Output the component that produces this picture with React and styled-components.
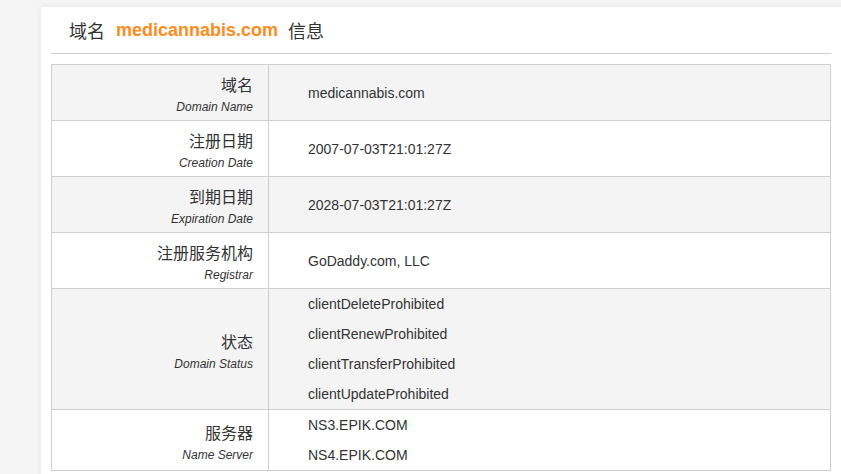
import React from 'react';
import styled, { createGlobalStyle } from 'styled-components';

const GlobalStyle = createGlobalStyle`
  html, body {
    margin: 0;
    padding: 0;
    background: #f5f5f5;
    overflow: hidden;
  }
  body {
    font-family: "Liberation Sans", Arial, "Noto Sans CJK SC", sans-serif;
    color: #333;
  }
`;

const Page = styled.div`
  padding: 7px 0 0 41px;
  height: 474px;
  box-sizing: border-box;
`;

const Card = styled.div`
  width: 800px;
  background: #fff;
  box-shadow: 0 0 6px rgba(0, 0, 0, 0.08);
  padding: 0 0 4px 10px;
  min-height: 480px;
`;

const Header = styled.div`
  width: 780px;
  height: 47px;
  box-sizing: border-box;
  border-bottom: 1px solid #cfcfcf;
  padding-left: 18px;
  display: flex;
  align-items: center;
  font-size: 18px;
  color: #333;
  font-family: "Liberation Sans", Arial, "Noto Sans CJK SC", sans-serif;
`;

const Domain = styled.span`
  color: #ff8c1a;
  font-weight: bold;
  margin: 0 10px 0 11px;
`;

const Table = styled.table`
  margin-top: 10px;
  width: 780px;
  border-collapse: collapse;
  border: 1px solid #cfcfcf;
`;

const Row = styled.tr`
  background: ${(p) => (p.$shaded ? '#f4f4f4' : '#fff')};
  border-bottom: 1px solid #cfcfcf;
`;

const LabelCell = styled.td`
  width: 217px;
  box-sizing: border-box;
  padding: 7px 15px 4px 0;
  text-align: right;
  vertical-align: middle;
  border-right: 1px solid #cfcfcf;
`;

const LabelZh = styled.div`
  font-size: 16px;
  line-height: 24px;
  font-family: "Noto Sans CJK SC", "Liberation Sans", sans-serif;
  color: #333;
`;

const LabelEn = styled.div`
  margin-top: 2px;
  font-size: 12px;
  line-height: 18px;
  font-style: italic;
  color: #333;
`;

const ValueCell = styled.td`
  padding: 0 0 0 39px;
  vertical-align: middle;
  font-size: 14px;
  color: #333;
`;

const ValueLine = styled.div`
  line-height: 30px;
`;

const rows = [
  { zh: '域名', en: 'Domain Name', values: ['medicannabis.com'] },
  { zh: '注册日期', en: 'Creation Date', values: ['2007-07-03T21:01:27Z'] },
  { zh: '到期日期', en: 'Expiration Date', values: ['2028-07-03T21:01:27Z'] },
  { zh: '注册服务机构', en: 'Registrar', values: ['GoDaddy.com, LLC'] },
  {
    zh: '状态',
    en: 'Domain Status',
    values: [
      'clientDeleteProhibited',
      'clientRenewProhibited',
      'clientTransferProhibited',
      'clientUpdateProhibited',
    ],
  },
  { zh: '服务器', en: 'Name Server', values: ['NS3.EPIK.COM', 'NS4.EPIK.COM'] },
];

export default function App() {
  return (
    <Page>
      <GlobalStyle />
      <Card>
        <Header>
          域名<Domain>medicannabis.com</Domain>信息
        </Header>
        <Table>
          <tbody>
            {rows.map((row, i) => (
              <Row key={row.en} $shaded={i % 2 === 0}>
                <LabelCell>
                  <LabelZh>{row.zh}</LabelZh>
                  <LabelEn>{row.en}</LabelEn>
                </LabelCell>
                <ValueCell>
                  {row.values.map((v) => (
                    <ValueLine key={v}>{v}</ValueLine>
                  ))}
                </ValueCell>
              </Row>
            ))}
          </tbody>
        </Table>
      </Card>
    </Page>
  );
}
